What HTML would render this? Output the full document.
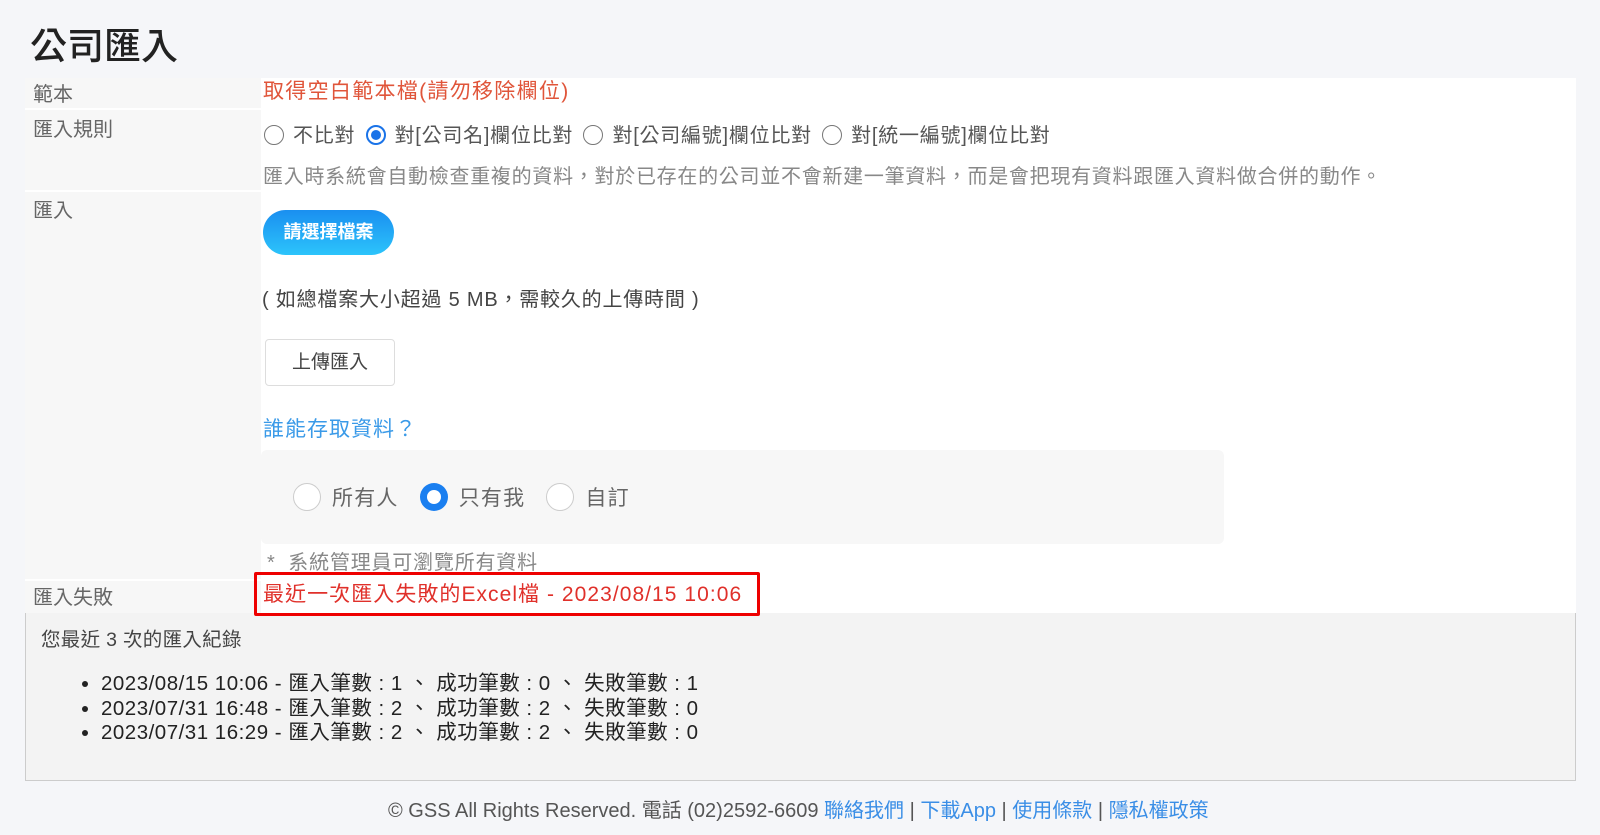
<!DOCTYPE html>
<html><head><meta charset="utf-8"><style>
*{margin:0;padding:0;box-sizing:border-box}
body{width:1600px;height:835px;background:#f5f6f9;font-family:"Liberation Sans","Noto Sans CJK TC",sans-serif;position:relative;overflow:hidden;color:#555}
.a{position:absolute;white-space:nowrap}
.lbl{font-size:20px;color:#666;left:33px;line-height:24px}
.rc{display:inline-block;width:20px;height:20px;border:1.5px solid #777;border-radius:50%;vertical-align:-3px;margin:0 9px 0 4px;position:relative}
.rc.on{border:2px solid #1a73e8}
.rc.on:after{content:"";position:absolute;left:3px;top:3px;width:10px;height:10px;border-radius:50%;background:#1a73e8}
.rb{display:inline-block;width:28px;height:28px;border:1.5px solid #ccc;border-radius:50%;background:#fff;vertical-align:-6px;margin-right:11px;position:relative}
.rb.on{border:none;background:#1a7ff0}
.rb.on:after{content:"";position:absolute;left:7px;top:7px;width:14px;height:14px;border-radius:50%;background:#fff}
ul li{font-size:20.5px;color:#222;line-height:24.5px;letter-spacing:0.5px}
a{color:#3a8ee6;text-decoration:none}
</style></head><body>
<div class="a" style="left:30px;top:24px;font-size:37px;line-height:46px;color:#222;font-weight:500">公司匯入</div>
<div class="a" style="left:25px;top:78px;width:236px;height:535px;background:#f7f7f7"></div>
<div class="a" style="left:25px;top:108px;width:236px;height:2px;background:#fff"></div>
<div class="a" style="left:25px;top:190px;width:236px;height:2px;background:#fff"></div>
<div class="a" style="left:25px;top:579px;width:236px;height:2px;background:#fff"></div>
<div class="a" style="left:261px;top:78px;width:1315px;height:535px;background:#fff"></div>
<div class="a lbl" style="top:83px">範本</div>
<div class="a lbl" style="top:118px">匯入規則</div>
<div class="a lbl" style="top:199px">匯入</div>
<div class="a lbl" style="top:586px">匯入失敗</div>
<div class="a" style="left:263px;top:79px;font-size:21px;line-height:26px;color:#e0553a;letter-spacing:1.3px">取得空白範本檔(請勿移除欄位)</div>
<div class="a" style="left:260px;top:124px;font-size:20px;line-height:24px;color:#555;letter-spacing:0.75px"><span class="rc"></span>不比對 <span class="rc on"></span>對[公司名]欄位比對 <span class="rc"></span>對[公司編號]欄位比對 <span class="rc"></span>對[統一編號]欄位比對</div>
<div class="a" style="left:263px;top:165px;font-size:20px;line-height:24px;color:#888;letter-spacing:0.72px">匯入時系統會自動檢查重複的資料，對於已存在的公司並不會新建一筆資料，而是會把現有資料跟匯入資料做合併的動作。</div>
<div class="a" style="left:263px;top:210px;width:131px;height:45px;border-radius:23px;background:linear-gradient(#1a8ff0,#2cc4fb);color:#fff;font-size:18px;font-weight:bold;text-align:center;line-height:45px">請選擇檔案</div>
<div class="a" style="left:262px;top:288px;font-size:20px;line-height:24px;color:#444;letter-spacing:0.8px">( 如總檔案大小超過 5 MB，需較久的上傳時間 )</div>
<div class="a" style="left:265px;top:339px;width:130px;height:47px;border:1px solid #ddd;border-radius:4px;font-size:19px;color:#444;text-align:center;line-height:45px">上傳匯入</div>
<div class="a" style="left:263px;top:417px;font-size:21px;line-height:26px;color:#3a9ae8;letter-spacing:1px">誰能存取資料？</div>
<div class="a" style="left:261px;top:450px;width:963px;height:94px;background:#f7f7f7;border-radius:6px"></div>
<div class="a" style="left:293px;top:483px;font-size:21px;line-height:26px;color:#666;letter-spacing:1.2px"><span class="rb"></span>所有人 &nbsp; <span class="rb on"></span>只有我 &nbsp; <span class="rb"></span>自訂</div>
<div class="a" style="left:267px;top:551px;font-size:20px;line-height:24px;color:#888;letter-spacing:0.8px">*&nbsp; 系統管理員可瀏覽所有資料</div>
<div class="a" style="left:25px;top:613px;width:1551px;height:168px;background:#f3f3f3;border:1px solid #ccc;border-top:none"></div>
<div class="a" style="left:254px;top:572px;width:506px;height:44px;border:3px solid #ee0000;border-radius:2px"></div>
<div class="a" style="left:263px;top:582px;font-size:21px;line-height:26px;color:#e0302a;letter-spacing:1.05px">最近一次匯入失敗的Excel檔 - 2023/08/15 10:06</div>
<div class="a" style="left:41px;top:628px;font-size:19.5px;line-height:24px;color:#444;letter-spacing:0.3px">您最近 3 次的匯入紀錄</div>
<ul class="a" style="left:101px;top:672px">
<li>2023/08/15 10:06 - 匯入筆數 : 1 、 成功筆數 : 0 、 失敗筆數 : 1</li>
<li>2023/07/31 16:48 - 匯入筆數 : 2 、 成功筆數 : 2 、 失敗筆數 : 0</li>
<li>2023/07/31 16:29 - 匯入筆數 : 2 、 成功筆數 : 2 、 失敗筆數 : 0</li>
</ul>
<div class="a" style="left:388px;top:799px;font-size:20px;line-height:24px;color:#555;letter-spacing:0">© GSS All Rights Reserved. 電話 (02)2592-6609 <a>聯絡我們</a> | <a>下載App</a> | <a>使用條款</a> | <a>隱私權政策</a></div>
</body></html>
